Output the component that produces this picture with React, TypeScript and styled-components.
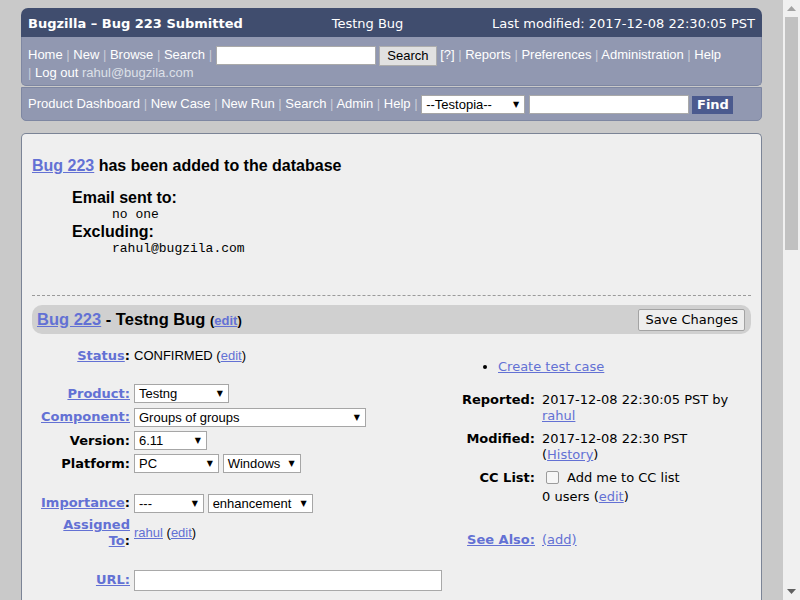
import React from "react";
import styled, { createGlobalStyle } from "styled-components";

const ARIAL = `"Liberation Sans", Arial, sans-serif`;
const VERDANA = `"DejaVu Sans", Verdana, sans-serif`;
const MONO = `"Liberation Mono", "Courier New", monospace`;
const LINK = "#6371d4";

const GlobalStyle = createGlobalStyle`
  html, body {
    margin: 0;
    padding: 0;
    background: #c9c9c9;
    overflow: hidden;
  }
`;

interface SelectProps {
  value: string;
  width: number;
}

const Select: React.FC<SelectProps> = ({ value, width }) => (
  <SelectBox $w={width}>
    <span>{value}</span>
    <Arrow>▼</Arrow>
  </SelectBox>
);

const Sep = () => <SepMark> | </SepMark>;

const App: React.FC = () => {
  return (
    <Viewport>
      <GlobalStyle />
      <Page>
        <TitleBar>
          <TitleLeft>Bugzilla – Bug 223 Submitted</TitleLeft>
          <div>Testng Bug</div>
          <div>Last modified: 2017-12-08 22:30:05 PST</div>
        </TitleBar>

        <LinksBar>
          <NavLink>Home</NavLink>
          <Sep />
          <NavLink>New</NavLink>
          <Sep />
          <NavLink>Browse</NavLink>
          <Sep />
          <NavLink>Search</NavLink>
          <Sep />
          <TextInput $w={160} $inline />{" "}
          <GrayButton>Search</GrayButton> <NavLink>[?]</NavLink>
          <Sep />
          <NavLink>Reports</NavLink>
          <Sep />
          <NavLink>Preferences</NavLink>
          <Sep />
          <NavLink>Administration</NavLink>
          <Sep />
          <NavLink>Help</NavLink>
          <br />
          <SepMark>| </SepMark>
          <NavLink>Log out</NavLink> <UserMail>rahul@bugzila.com</UserMail>
        </LinksBar>

        <TestopiaBar>
          <NavLink>Product Dashboard</NavLink>
          <Sep />
          <NavLink>New Case</NavLink>
          <Sep />
          <NavLink>New Run</NavLink>
          <Sep />
          <NavLink>Search</NavLink>
          <Sep />
          <NavLink>Admin</NavLink>
          <Sep />
          <NavLink>Help</NavLink>
          <Sep />
          <Select value="--Testopia--" width={104} /> <TextInput $w={160} />{" "}
          <FindButton>Find</FindButton>
        </TestopiaBar>

        <MainPanel>
          <Heading>
            <Link>Bug 223</Link> has been added to the database
          </Heading>

          <EmailBlock>
            <EmailLabel>Email sent to:</EmailLabel>
            <EmailValue>no one</EmailValue>
            <EmailLabel>Excluding:</EmailLabel>
            <EmailValue>rahul@bugzila.com</EmailValue>
          </EmailBlock>

          <Dashed />

          <BugTitleBar>
            <BugTitle>
              <Link>Bug 223</Link> - Testng Bug <SmallEdit>(<Link>edit</Link>)</SmallEdit>
            </BugTitle>
            <SaveButton>Save Changes</SaveButton>
          </BugTitleBar>

          <Fields>
            <LeftTable>
              <FieldRow $h={22} $top={11}>
                <Label>
                  <Link>Status</Link>:
                </Label>
                <Value>
                  CONFIRMED (<Link>edit</Link>)
                </Value>
              </FieldRow>
              <FieldRow $h={23} $top={15}>
                <Label>
                  <Link>Product:</Link>
                </Label>
                <Value>
                  <Select value="Testng" width={95} />
                </Value>
              </FieldRow>
              <FieldRow $h={24}>
                <Label>
                  <Link>Component:</Link>
                </Label>
                <Value>
                  <Select value="Groups of groups" width={232} />
                </Value>
              </FieldRow>
              <FieldRow $h={23}>
                <Label>Version:</Label>
                <Value>
                  <Select value="6.11" width={73} />
                </Value>
              </FieldRow>
              <FieldRow $h={23}>
                <Label>Platform:</Label>
                <Value>
                  <Select value="PC" width={85} /> <Select value="Windows" width={78} />
                </Value>
              </FieldRow>
              <FieldRow $h={24} $top={16}>
                <Label>
                  <Link>Importance</Link>:
                </Label>
                <Value>
                  <Select value="---" width={70} /> <Select value="enhancement" width={105} />
                </Value>
              </FieldRow>
              <FieldRow $h={36}>
                <Label>
                  <Link>Assigned</Link>
                  <br />
                  <Link>To</Link>:
                </Label>
                <Value>
                  <Link>rahul</Link> (<Link>edit</Link>)
                </Value>
              </FieldRow>
              <FieldRow $h={24} $top={17}>
                <Label>
                  <Link>URL:</Link>
                </Label>
                <Value>
                  <TextInput $w={308} $h={21} />
                </Value>
              </FieldRow>
            </LeftTable>

            <RightColumn>
              <Actions>
                <li>
                  <Link>Create test case</Link>
                </li>
              </Actions>
              <PeopleGrid>
                <SideLabel>Reported:</SideLabel>
                <SideValue>
                  2017-12-08 22:30:05 PST by
                  <br />
                  <Link>rahul</Link>
                </SideValue>
                <SideLabel>Modified:</SideLabel>
                <SideValue>
                  2017-12-08 22:30 PST
                  <br />(<Link>History</Link>)
                </SideValue>
                <SideLabel>CC List:</SideLabel>
                <SideValue>
                  <CcLine>
                    <CheckBox /> Add me to CC list
                  </CcLine>
                  0 users (<Link>edit</Link>)
                </SideValue>
                <SideLabel $top={20}>
                  <Link>See Also:</Link>
                </SideLabel>
                <SideValue $top={20}>
                  <Link>(add)</Link>
                </SideValue>
              </PeopleGrid>
            </RightColumn>
          </Fields>
        </MainPanel>
      </Page>

      <Scrollbar>
        <ScrollArrow>
          <svg width="9" height="5" viewBox="0 0 9 5">
            <path d="M0 5 L4.5 0 L9 5 Z" fill="#a3a3a3" />
          </svg>
        </ScrollArrow>
        <Thumb />
        <ScrollFill />
        <ScrollArrow>
          <svg width="9" height="5" viewBox="0 0 9 5">
            <path d="M0 0 L4.5 5 L9 0 Z" fill="#606060" />
          </svg>
        </ScrollArrow>
      </Scrollbar>
    </Viewport>
  );
};

const Viewport = styled.div`
  display: flex;
  width: 800px;
  height: 600px;
  overflow: hidden;
`;

const Page = styled.div`
  flex: 1;
  min-width: 0;
  padding: 8px 21px 0;
  box-sizing: border-box;
  overflow: hidden;
`;

const TitleBar = styled.div`
  display: flex;
  justify-content: space-between;
  align-items: center;
  height: 29px;
  padding: 1px 7px 0;
  box-sizing: border-box;
  background: #404d6e;
  color: #fff;
  border-radius: 7px 7px 0 0;
  font: 13px ${VERDANA};
  white-space: nowrap;
`;

const TitleLeft = styled.div`
  font-weight: bold;
`;

const LinksBar = styled.div`
  background: #9198b1;
  border: 1px solid #7e87a2;
  border-top: none;
  border-radius: 0 0 5px 5px;
  padding: 9px 6px 3px;
  font: 13px/18px ${ARIAL};
  color: #fff;
`;

const TestopiaBar = styled.div`
  margin-top: 1px;
  background: #9198b1;
  border: 1px solid #7e87a2;
  border-radius: 0 0 5px 5px;
  padding: 6px 6px;
  font: 13px/19px ${ARIAL};
  color: #fff;
`;

const NavLink = styled.span`
  color: #fff;
`;

const SepMark = styled.span`
  color: #c9cdd9;
`;

const UserMail = styled.span`
  color: #dde0e8;
`;

const TextInput = styled.span<{ $w: number; $h?: number; $inline?: boolean }>`
  display: inline-block;
  box-sizing: border-box;
  width: ${(p) => p.$w}px;
  height: ${(p) => p.$h ?? 19}px;
  margin: ${(p) => (p.$inline ? "-2px 0" : "0")};
  background: #fff;
  border: 1px solid #a9a9a9;
  vertical-align: middle;
`;

const GrayButton = styled.span`
  display: inline-block;
  box-sizing: border-box;
  height: 20px;
  margin: -2px 0;
  padding: 0 7px;
  background: #e1e1e1;
  border: 1px solid #adadad;
  color: #000;
  font: 13px/18px ${ARIAL};
  vertical-align: middle;
`;

const FindButton = styled.span`
  display: inline-block;
  box-sizing: border-box;
  width: 41px;
  height: 18px;
  background: #4b5a8e;
  color: #fff;
  font: bold 13px/18px ${VERDANA};
  text-align: center;
  vertical-align: middle;
`;

const SelectBox = styled.span<{ $w: number }>`
  display: inline-flex;
  align-items: center;
  justify-content: space-between;
  box-sizing: border-box;
  width: ${(p) => p.$w}px;
  height: 19px;
  padding: 0 5px 0 4px;
  border: 1px solid #a6a6a6;
  background: #fff;
  color: #000;
  font: 13px ${ARIAL};
  vertical-align: middle;
  white-space: nowrap;
`;

const Arrow = styled.span`
  font: 8px ${VERDANA};
  color: #000;
`;

const MainPanel = styled.div`
  margin-top: 12px;
  min-height: 480px;
  padding: 0 10px;
  background: #efefef;
  border: 1px solid #7b8496;
  border-bottom: none;
  border-radius: 5px 5px 0 0;
  font: 13px ${ARIAL};
  color: #000;
`;

const Link = styled.a`
  color: ${LINK};
  text-decoration: underline;
  cursor: pointer;
`;

const Heading = styled.div`
  margin-top: 22px;
  font: bold 16px/19px ${ARIAL};
`;

const EmailBlock = styled.div`
  margin: 14px 0 0 40px;
`;

const EmailLabel = styled.div`
  font: bold 16px/17px ${ARIAL};
`;

const EmailValue = styled.div`
  margin-left: 40px;
  font: 13px/17px ${MONO};
`;

const Dashed = styled.div`
  margin-top: 38px;
  border-top: 1px dashed #9a9a9a;
`;

const BugTitleBar = styled.div`
  display: flex;
  align-items: center;
  justify-content: space-between;
  height: 29px;
  margin-top: 9px;
  padding: 0 6px 0 5px;
  background: #d0d0d0;
  border-radius: 10px;
`;

const BugTitle = styled.div`
  font: bold 16.5px ${ARIAL};
`;

const SmallEdit = styled.span`
  font-size: 13px;
`;

const SaveButton = styled.span`
  box-sizing: border-box;
  height: 22px;
  padding: 0 6px;
  background: #eeeeee;
  border: 1px solid #a3a3a3;
  border-radius: 2px;
  font: 13px/20px ${VERDANA};
  color: #000;
`;

const Fields = styled.div`
  display: flex;
  align-items: flex-start;
`;

const LeftTable = styled.div`
  width: 418px;
  flex: none;
`;

const FieldRow = styled.div<{ $h: number; $top?: number }>`
  display: grid;
  grid-template-columns: 98px 1fr;
  column-gap: 4px;
  align-items: center;
  min-height: ${(p) => p.$h}px;
  margin-top: ${(p) => p.$top ?? 0}px;
`;

const Label = styled.div`
  text-align: right;
  font: bold 13px/16px ${VERDANA};
  white-space: nowrap;
`;

const Value = styled.div`
  font: 13px/16px ${ARIAL};
  white-space: nowrap;
`;

const RightColumn = styled.div`
  flex: 1;
  padding-top: 24px;
`;

const Actions = styled.ul`
  margin: 0;
  padding-left: 48px;
  list-style: disc;
  font: 13px/18px ${VERDANA};
`;

const PeopleGrid = styled.div`
  display: grid;
  grid-template-columns: 85px 1fr;
  column-gap: 7px;
  row-gap: 7px;
  margin-top: 16px;
  font: 13px/16px ${VERDANA};
`;

const SideLabel = styled.div<{ $top?: number }>`
  text-align: right;
  font-weight: bold;
  margin-top: ${(p) => p.$top ?? 0}px;
  white-space: nowrap;
`;

const SideValue = styled.div<{ $top?: number }>`
  margin-top: ${(p) => p.$top ?? 0}px;
`;

const CcLine = styled.div`
  display: flex;
  align-items: center;
  gap: 8px;
  height: 19px;
  margin-top: -2px;
  margin-bottom: 2px;
`;

const CheckBox = styled.span`
  display: inline-block;
  box-sizing: border-box;
  width: 13px;
  height: 13px;
  margin-left: 4px;
  background: #f6f6f6;
  border: 1px solid #9b9b9b;
  border-radius: 2px;
`;

const Scrollbar = styled.div`
  width: 17px;
  flex: none;
  display: flex;
  flex-direction: column;
  align-items: center;
  background: #f0f0f0;
`;

const ScrollArrow = styled.div`
  height: 17px;
  width: 17px;
  display: flex;
  align-items: center;
  justify-content: center;
`;

const Thumb = styled.div`
  width: 13px;
  height: 233px;
  background: #c1c1c1;
`;

const ScrollFill = styled.div`
  flex: 1;
`;

export default App;
